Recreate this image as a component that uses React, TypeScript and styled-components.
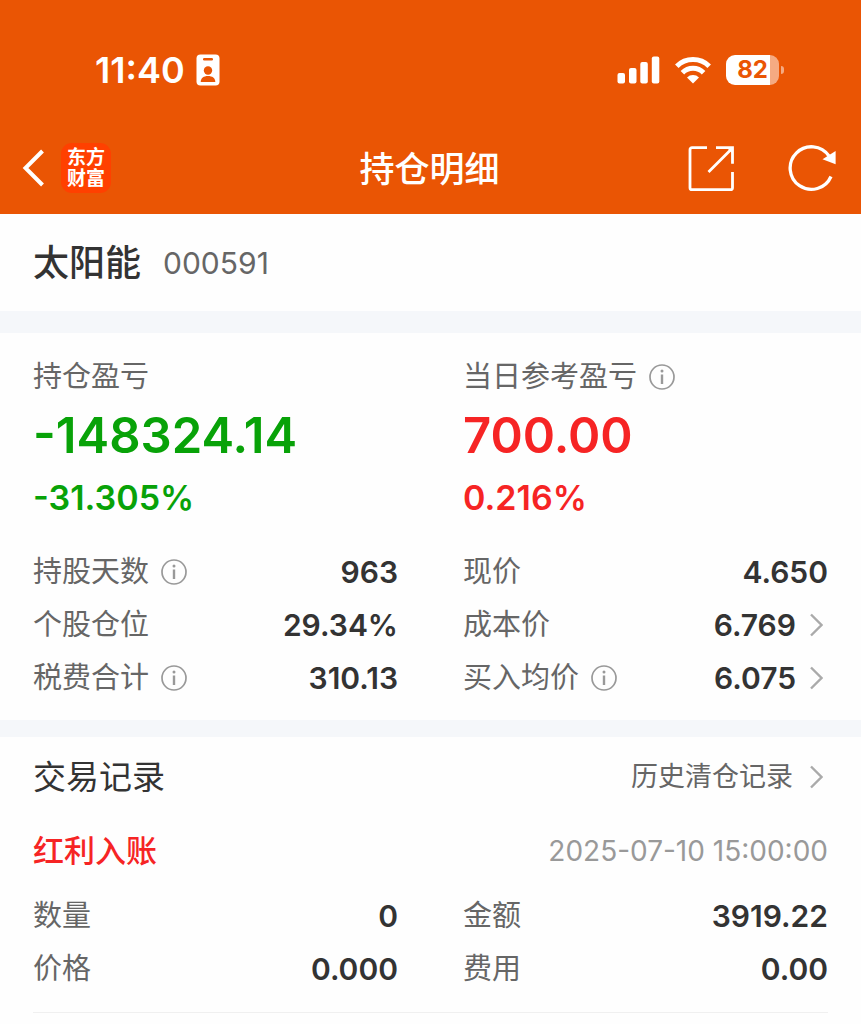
import React from "react";
import styled, { createGlobalStyle } from "styled-components";

const orange = "#ea5504";
const green = "#08a208";
const red = "#f62424";

const GlobalStyle = createGlobalStyle`
  * { box-sizing: border-box; }
  body {
    margin: 0;
    background: #fefefe;
    color: #333;
    font-family: Inter, "Noto Sans CJK SC", sans-serif;
    font-size: 29px;
  }
  h1, h2, h3, dl, dt, dd, p { margin: 0; font-weight: inherit; }
  button { padding: 0; border: 0; background: none; color: inherit; font: inherit; cursor: pointer; }
  a { color: inherit; text-decoration: none; }
  svg { display: block; flex: none; }
`;

const Header = styled.header`
  background: ${orange};
  color: #fff;
`;

const StatusBar = styled.div`
  display: flex;
  align-items: center;
  justify-content: space-between;
  height: 122px;
  padding: 46px 77px 28px 95px;
`;

const StatusGroup = styled.div<{ $gap: number }>`
  display: flex;
  align-items: center;
  gap: ${(p) => p.$gap}px;
`;

const Clock = styled.time`
  font-size: 36px;
  font-weight: 600;
  line-height: 48px;
`;

const Battery = styled.div`
  display: flex;
  align-items: center;
  gap: 2px;
`;

const BatteryBody = styled.span`
  width: 53px;
  height: 30px;
  border-radius: 9px;
  background: linear-gradient(to right, #fff 83%, #f5aa82 83%);
  color: ${orange};
  font-size: 24px;
  font-weight: 700;
  line-height: 30px;
  text-align: center;
`;

const BatteryTip = styled.span`
  width: 3px;
  height: 8px;
  border-radius: 0 3px 3px 0;
  background: #f5aa82;
`;

const NavBar = styled.nav`
  display: grid;
  grid-template-columns: 1fr auto 1fr;
  align-items: center;
  height: 92px;
  padding: 0 24px 0 22px;
`;

const NavSide = styled.div<{ $end?: boolean; $gap: number }>`
  display: flex;
  align-items: center;
  justify-content: ${(p) => (p.$end ? "flex-end" : "flex-start")};
  gap: ${(p) => p.$gap}px;
`;

const NavTitle = styled.h1`
  padding-top: 2px;
  font-size: 35px;
  font-weight: 500;
  line-height: 48px;
`;

const Brand = styled.a`
  display: grid;
  place-content: center;
  width: 50px;
  height: 50px;
  border-radius: 11px;
  background: #ff4000;
  font-size: 19px;
  font-weight: 700;
  line-height: 21px;
`;

const StockBar = styled.section`
  display: flex;
  align-items: center;
  gap: 22px;
  height: 97px;
  padding: 0 33px;
`;

const StockName = styled.h2`
  font-size: 36px;
  font-weight: 500;
  line-height: 48px;
`;

const StockCode = styled.span`
  color: #666;
  font-size: 30px;
`;

const Band = styled.div<{ $size: number }>`
  height: ${(p) => p.$size}px;
  background: #f5f7fa;
`;

const Columns = styled.div`
  display: grid;
  grid-template-columns: 1fr 1fr;
  column-gap: 65px;
`;

const Summary = styled.section`
  padding: 23px 33px 16px;
`;

const Label = styled.dt`
  display: flex;
  align-items: center;
  gap: 12px;
  color: #666;
  line-height: 42px;
`;

const Profit = styled.dl<{ $color: string }>`
  padding-bottom: 24px;
  color: ${(p) => p.$color};
  font-weight: 600;

  dt { font-weight: 400; }
`;

const Amount = styled.dd`
  font-size: 49px;
  line-height: 76px;
`;

const Percent = styled.dd`
  font-size: 34px;
  line-height: 47px;
`;

const FactRow = styled.div`
  display: flex;
  align-items: center;
  justify-content: space-between;
  height: 53px;
`;

const FactValue = styled.dd`
  display: flex;
  align-items: center;
  font-size: 30px;
  font-weight: 600;
`;

const ArrowSlot = styled.span<{ $gap: number }>`
  padding: 0 5px 0 ${(p) => p.$gap}px;
`;

const Records = styled.section`
  padding: 0 33px;
`;

const RecordsHead = styled.div`
  display: flex;
  align-items: center;
  justify-content: space-between;
  height: 80px;
  line-height: 40px;
`;

const RecordsTitle = styled.h2`
  font-size: 33px;
`;

const HistoryLink = styled.a`
  display: flex;
  align-items: center;
  color: #666;
  font-size: 27px;
`;

const Record = styled.article`
  padding-bottom: 17px;
  border-bottom: 1px solid #f0f0f0;
`;

const RecordHead = styled.div`
  display: flex;
  align-items: center;
  justify-content: space-between;
  height: 68px;
  margin-bottom: 4px;
  line-height: 40px;
`;

const RecordName = styled.h3`
  color: ${red};
  font-size: 31px;
  font-weight: 500;
`;

const RecordTime = styled.time`
  color: #999;
  font-size: 28px;
`;

const InfoIcon = () => (
  <svg width="26" height="26" viewBox="0 0 26 26" fill="none" stroke="#999" strokeWidth="1.7">
    <circle cx="13" cy="13" r="12" />
    <path d="M13 10.500v9.500" strokeWidth="2.4" />
    <circle cx="13" cy="7" r="1.5" fill="#999" stroke="none" />
  </svg>
);

const Arrow = ({ gap = 14 }: { gap?: number }) => (
  <ArrowSlot $gap={gap}>
    <svg width="13" height="24" viewBox="0 0 13 24" fill="none" stroke="#aaa" strokeWidth="2.4">
      <path d="M1 1.5 11.5 12 1 22.5" />
    </svg>
  </ArrowSlot>
);

const ContactCardIcon = () => (
  <svg width="24" height="32" viewBox="0 0 24 32">
    <rect x="0.5" y="0.5" width="23" height="31" rx="4" fill="#fff" />
    <rect x="7" y="4" width="10" height="2.6" rx="1.3" fill={orange} />
    <circle cx="12" cy="16.500" r="4.2" fill={orange} />
    <path d="M4.7 28c0-4 3-6 7.300-6s7.300 2 7.300 6z" fill={orange} />
  </svg>
);

const SignalIcon = () => (
  <svg width="43" height="28" viewBox="0 0 43 28" fill="#fff">
    <rect x="0.500" y="17" width="7.500" height="10.500" rx="2" />
    <rect x="12" y="12" width="7.500" height="15.500" rx="2" />
    <rect x="23.300" y="6" width="7.500" height="21.500" rx="2" />
    <rect x="34.800" y="0.500" width="7.500" height="27" rx="2" />
  </svg>
);

const WifiIcon = () => (
  <svg width="36" height="27" viewBox="0 0 36 27" fill="none" stroke="#fff" strokeWidth="5">
    <path d="M1.800 9.200a23 23 0 0 1 32.400 0" />
    <path d="M7.400 15.700a15 15 0 0 1 21.200 0" />
    <path d="M18 26.500l-6-6a8.500 8.500 0 0 1 12 0z" fill="#fff" stroke="none" />
  </svg>
);

const BackIcon = () => (
  <svg width="23" height="38" viewBox="0 0 23 38" fill="none" stroke="#fff" strokeWidth="4">
    <path d="M20.500 2 3.500 19l17 17" />
  </svg>
);

const ShareIcon = () => (
  <svg width="48" height="48" viewBox="0 0 48 48" fill="none" stroke="#fff" strokeWidth="2.800">
    <path d="M20 3.700H5a2 2 0 0 0-2 2v38a2 2 0 0 0 2 2h38.500a2 2 0 0 0 2-2V28" />
    <path d="M29 3.700h16.500v16M21.500 28 45 4.500" />
    <path d="M39 3h7v7z" fill="#fff" stroke="none" />
  </svg>
);

const RefreshIcon = () => (
  <svg width="49" height="48" viewBox="0 0 49 48" fill="none" stroke="#fff" strokeWidth="3.300">
    <path d="M43 32.500A21.300 21.300 0 1 1 41 12" />
    <path d="M47.600 7v13.200L34.500 15.300z" fill="#fff" stroke="none" />
  </svg>
);

type FactProps = { label: string; value: string; info?: boolean; arrow?: boolean };

const Fact = ({ label, value, info, arrow }: FactProps) => (
  <FactRow>
    <Label>
      {label}
      {info && <InfoIcon />}
    </Label>
    <FactValue>
      {value}
      {arrow && <Arrow />}
    </FactValue>
  </FactRow>
);

export default function App() {
  return (
    <>
      <GlobalStyle />
      <Header>
        <StatusBar>
          <StatusGroup $gap={11}>
            <Clock>11:40</Clock>
            <ContactCardIcon />
          </StatusGroup>
          <StatusGroup $gap={15}>
            <SignalIcon />
            <WifiIcon />
            <Battery>
              <BatteryBody>82</BatteryBody>
              <BatteryTip />
            </Battery>
          </StatusGroup>
        </StatusBar>
        <NavBar>
          <NavSide $gap={16}>
            <button type="button" aria-label="返回">
              <BackIcon />
            </button>
            <Brand href="#home">
              <span>东方</span>
              <span>财富</span>
            </Brand>
          </NavSide>
          <NavTitle>持仓明细</NavTitle>
          <NavSide $end $gap={53}>
            <button type="button" aria-label="分享">
              <ShareIcon />
            </button>
            <button type="button" aria-label="刷新">
              <RefreshIcon />
            </button>
          </NavSide>
        </NavBar>
      </Header>
      <main>
        <StockBar>
          <StockName>太阳能</StockName>
          <StockCode>000591</StockCode>
        </StockBar>
        <Band $size={22} />
        <Summary>
          <Columns>
            <Profit $color={green}>
              <Label>持仓盈亏</Label>
              <Amount>-148324.14</Amount>
              <Percent>-31.305%</Percent>
            </Profit>
            <Profit $color={red}>
              <Label>
                当日参考盈亏
                <InfoIcon />
              </Label>
              <Amount>700.00</Amount>
              <Percent>0.216%</Percent>
            </Profit>
          </Columns>
          <Columns>
            <dl>
              <Fact label="持股天数" value="963" info />
              <Fact label="个股仓位" value="29.34%" />
              <Fact label="税费合计" value="310.13" info />
            </dl>
            <dl>
              <Fact label="现价" value="4.650" />
              <Fact label="成本价" value="6.769" arrow />
              <Fact label="买入均价" value="6.075" info arrow />
            </dl>
          </Columns>
        </Summary>
        <Band $size={17} />
        <Records>
          <RecordsHead>
            <RecordsTitle>交易记录</RecordsTitle>
            <HistoryLink href="#history">
              历史清仓记录
              <Arrow gap={17} />
            </HistoryLink>
          </RecordsHead>
          <Record>
            <RecordHead>
              <RecordName>红利入账</RecordName>
              <RecordTime>2025-07-10 15:00:00</RecordTime>
            </RecordHead>
            <Columns>
              <dl>
                <Fact label="数量" value="0" />
                <Fact label="价格" value="0.000" />
              </dl>
              <dl>
                <Fact label="金额" value="3919.22" />
                <Fact label="费用" value="0.00" />
              </dl>
            </Columns>
          </Record>
        </Records>
      </main>
    </>
  );
}
